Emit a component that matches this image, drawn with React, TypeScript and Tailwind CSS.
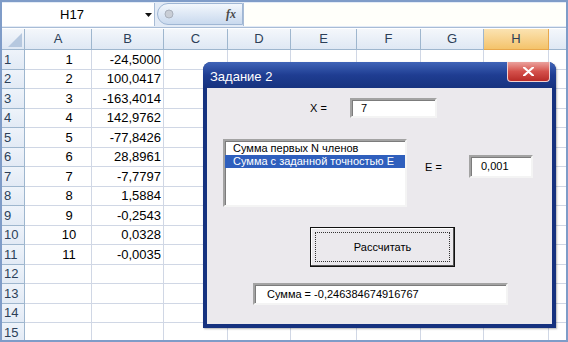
const COLS = [
  { key: "A", w: 67 },
  { key: "B", w: 72 },
  { key: "C", w: 64 },
  { key: "D", w: 63 },
  { key: "E", w: 66 },
  { key: "F", w: 64 },
  { key: "G", w: 63 },
  { key: "H", w: 65 },
  { key: "I", w: 20 },
];

const B_VALUES = [
  "-24,5000",
  "100,0417",
  "-163,4014",
  "142,9762",
  "-77,8426",
  "28,8961",
  "-7,7797",
  "1,5884",
  "-0,2543",
  "0,0328",
  "-0,0035",
];

const ROW_HEIGHTS = [20, 19, 20, 19, 20, 19, 20, 19, 20, 19, 20, 19, 20, 19, 20];

const cellFont = { fontFamily: '"Liberation Sans", Arial, sans-serif' };
const dlgFont = { fontFamily: '"Liberation Sans", Tahoma, sans-serif' };

function FormulaBar() {
  return (
    <div className="flex h-[26px] bg-[#e3ebf6] border-b border-[#a8bcd6]" style={cellFont}>
      <div className="relative flex w-[153px] h-[23px] mt-[1px] items-center bg-white border-r border-[#a8bcd6]">
        <span className="w-[140px] text-center text-[13px] text-black">H17</span>
        <svg className="absolute left-[143px] top-[10px]" width="7" height="4" viewBox="0 0 7 4">
          <polygon points="0,0 7,0 3.5,4" fill="#111" />
        </svg>
      </div>
      <div className="flex w-[86px] h-[22px] mt-[1px] ml-[2px] items-center rounded-l-full border border-[#9fb6d4] bg-gradient-to-b from-[#f3f7fc] to-[#c9d9ee]">
        <svg className="ml-[6px]" width="10" height="10" viewBox="0 0 10 10">
          <circle cx="5" cy="5" r="4" fill="#c9ced6" stroke="#a9b0bb" strokeWidth="1" />
        </svg>
        <span
          className="ml-auto mr-[6px] text-[12px] italic font-bold text-[#4a4a4a]"
          style={{ fontFamily: '"Liberation Serif", serif' }}
        >
          fx
        </span>
      </div>
      <div className="flex-1 h-[23px] mt-[1px] bg-[#fffffa] border-l border-[#a8bcd6]" />
    </div>
  );
}

function HeaderRow() {
  return (
    <div className="flex h-[21px] text-[13px] text-[#2c3f58]" style={cellFont}>
      <div className="relative w-[23px] shrink-0 bg-gradient-to-b from-[#f4f7fb] to-[#dfe8f4] border-r border-b border-[#9eb6ce]">
        <svg className="absolute right-[2px] bottom-[2px]" width="14" height="14" viewBox="0 0 14 14">
          <polygon points="14,0 14,14 0,14" fill="#b6c8df" />
        </svg>
      </div>
      {COLS.map((c) => (
        <div
          key={c.key}
          className={
            c.key === "H"
              ? "flex shrink-0 items-center justify-center bg-gradient-to-b from-[#fbe3b1] to-[#f4c36a] border-r border-b border-[#e8a84c]"
              : "flex shrink-0 items-center justify-center bg-gradient-to-b from-[#f4f7fb] to-[#dfe8f4] border-r border-b border-[#9eb6ce]"
          }
          style={{ width: c.w }}
        >
          {c.key === "I" ? "" : c.key}
        </div>
      ))}
    </div>
  );
}

function DataRow({ index, height }: { index: number; height: number }) {
  const n = index + 1;
  const hasData = index < B_VALUES.length;
  return (
    <div className="flex text-[13px]" style={{ ...cellFont, height }}>
      <div className="flex w-[23px] shrink-0 items-center pl-[2px] bg-gradient-to-b from-[#eef3fa] to-[#e2eaf5] border-r border-b border-[#9eb6ce] text-[#2c3f58]">
        {n}
      </div>
      {COLS.map((c) => (
        <div
          key={c.key}
          className={
            c.key === "A"
              ? "flex shrink-0 items-center justify-center pl-[22px] border-r border-b border-[#d0d7e5] text-black"
              : c.key === "B"
              ? "flex shrink-0 items-center justify-end pr-[2px] border-r border-b border-[#d0d7e5] text-black"
              : "shrink-0 border-r border-b border-[#d0d7e5]"
          }
          style={{ width: c.w }}
        >
          {hasData && c.key === "A" ? n : ""}
          {hasData && c.key === "B" ? B_VALUES[index] : ""}
        </div>
      ))}
    </div>
  );
}

function SunkenBox({ className, children }: { className: string; children?: React.ReactNode }) {
  return (
    <div
      className={
        "border-2 border-t-[#a3a3a3] border-l-[#a3a3a3] border-b-[#f4f4f4] border-r-[#f4f4f4] bg-white shadow-[inset_1px_1px_0_#7c7c7c] " +
        className
      }
    >
      {children}
    </div>
  );
}

function Dialog() {
  return (
    <div
      className="absolute left-[201px] top-[60px] flex w-[353px] h-[266px] flex-col rounded-t-[8px] bg-[#16327f] shadow-[1px_1px_2px_rgba(0,0,0,0.3)]"
      style={dlgFont}
    >
      <div className="flex h-[26px] items-start justify-between rounded-t-[8px] bg-gradient-to-b from-[#4064b8] via-[#1f3d92] to-[#17337f] pl-[7px] pr-[6px]">
        <span className="mt-[5px] text-[13px] text-white">Задание 2</span>
        <div className="flex w-[43px] h-[20px] items-center justify-center rounded-b-[4px] border border-[#f3d0cf] border-t-0 bg-gradient-to-b from-[#eaa19d] via-[#d4504b] to-[#b82a27]">
          <svg width="11" height="9" viewBox="0 0 11 9">
            <path d="M1 0.5 L10 8.5 M10 0.5 L1 8.5" stroke="white" strokeWidth="2.2" strokeLinecap="round" />
          </svg>
        </div>
      </div>
      <div className="flex flex-1 flex-col mx-[4px] mb-[4px] bg-[#ebe9ed] text-[11px] text-black">
        <div className="flex items-center mt-[10px]">
          <span className="ml-[103px] w-[40px]">X =</span>
          <SunkenBox className="w-[87px] h-[20px] flex items-center pl-[9px]">7</SunkenBox>
        </div>
        <div className="flex items-start mt-[21px]">
          <SunkenBox className="ml-[16px] w-[184px] h-[68px] pt-[1px]">
            <div className="h-[13px] pl-[8px] leading-[13px]">Сумма первых N членов</div>
            <div className="h-[13px] pl-[8px] leading-[13px] bg-[#2f5fbd] text-white">
              Сумма с заданной точностью E
            </div>
          </SunkenBox>
          <div className="flex items-center mt-[16px]">
            <span className="ml-[18px] w-[44px] mt-[2px]">E =</span>
            <SunkenBox className="w-[64px] h-[23px] flex items-center pl-[10px]">0,001</SunkenBox>
          </div>
        </div>
        <div className="ml-[103px] mt-[20px] w-[145px] h-[40px] border border-[#111] shadow-[inset_-1px_-1px_0_#555,inset_1px_1px_0_#fff] p-[4px]">
          <div className="flex h-full items-center justify-center border border-dotted border-[#333]">
            Рассчитать
          </div>
        </div>
        <SunkenBox className="ml-[46px] mt-[16px] w-[255px] h-[22px] flex items-center pl-[12px]">
          Сумма = -0,246384674916767
        </SunkenBox>
      </div>
    </div>
  );
}

export default function App() {
  return (
    <div className="relative w-[568px] h-[342px] overflow-hidden bg-white border-2 border-[#7f9cc8]">
      <FormulaBar />
      <div className="mt-[1px]">
        <HeaderRow />
        {ROW_HEIGHTS.map((h, i) => (
          <DataRow key={i} index={i} height={h} />
        ))}
      </div>
      <Dialog />
    </div>
  );
}
